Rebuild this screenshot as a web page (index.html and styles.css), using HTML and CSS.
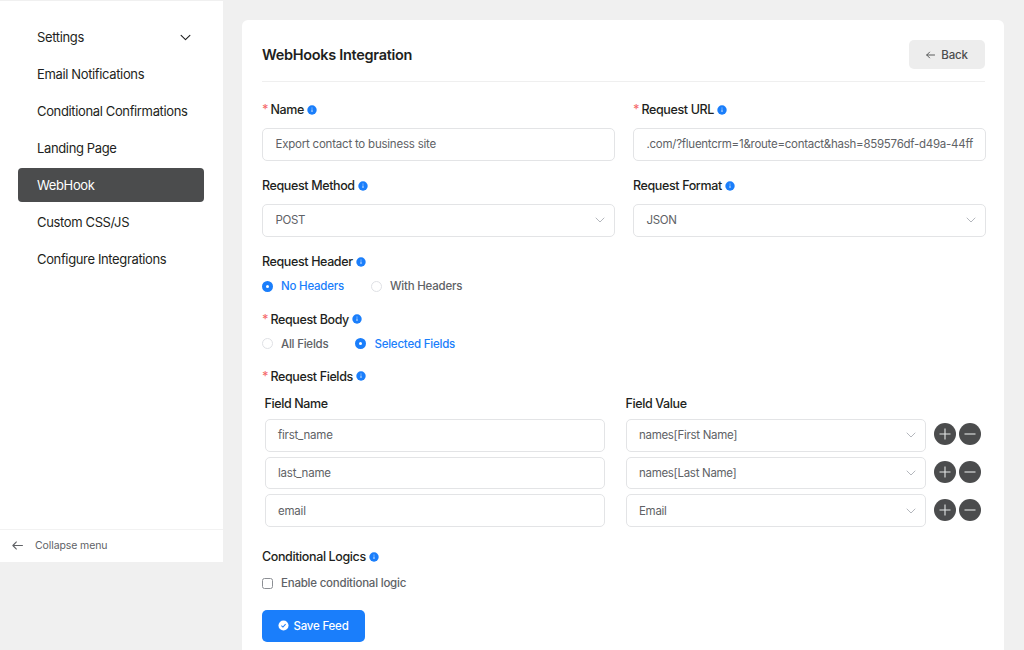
FILE: index.html
```
<!DOCTYPE html>
<html lang="en">
<head>
    <meta charset="UTF-8">
    <meta name="viewport" content="width=device-width, initial-scale=1.0">
    <title>WebHooks Integration</title>
    <link rel="stylesheet" href="styles.css">
</head>
<body>
    <!-- shared icons -->
    <svg class="sprite" width="0" height="0">
        <symbol id="info" viewBox="0 0 10 10">
            <circle cx="5" cy="5" r="4.7" fill="#1a7efb"/>
            <path d="M5 4.5v2.6" stroke="#c4deff" stroke-width="1.1"/>
            <circle cx="5" cy="3" r=".6" fill="#c4deff"/>
        </symbol>
        <symbol id="down" viewBox="0 0 10 6">
            <path d="M1 1l4 4 4-4" fill="none" stroke="currentColor" stroke-linecap="round" stroke-linejoin="round"/>
        </symbol>
        <symbol id="left" viewBox="0 0 10 8">
            <path d="M9.5 4H.8M4 .8L.8 4 4 7.2" fill="none" stroke="currentColor" stroke-linecap="round" stroke-linejoin="round"/>
        </symbol>
        <symbol id="plus" viewBox="0 0 22 22">
            <path d="M11 5.5v11M5.5 11h11" stroke="#e4e5e5" stroke-width="1.1"/>
        </symbol>
        <symbol id="minus" viewBox="0 0 22 22">
            <path d="M5.5 11h11" stroke="#e4e5e5" stroke-width="1.1"/>
        </symbol>
    </svg>

    <div class="page">
        <aside class="sidebar">
            <ul class="menu">
                <li>Settings <svg class="menu-arrow"><use href="#down"/></svg></li>
                <li>Email Notifications</li>
                <li>Conditional Confirmations</li>
                <li>Landing Page</li>
                <li class="active">WebHook</li>
                <li>Custom CSS/JS</li>
                <li>Configure Integrations</li>
            </ul>
            <div class="collapse">
                <svg class="collapse-arrow"><use href="#left"/></svg>
                <span>Collapse menu</span>
            </div>
        </aside>

        <main class="card">
            <div class="card-head">
                <h1>WebHooks Integration</h1>
                <button class="back"><svg><use href="#left"/></svg>Back</button>
            </div>

            <div class="grid">
                <div class="group">
                    <div class="label"><i>*</i>Name <svg><use href="#info"/></svg></div>
                    <div class="input">Export contact to business site</div>
                </div>
                <div class="group">
                    <div class="label"><i>*</i>Request URL <svg><use href="#info"/></svg></div>
                    <div class="input url">.com/?fluentcrm=1&amp;route=contact&amp;hash=859576df-d49a-44ff</div>
                </div>
                <div class="group">
                    <div class="label">Request Method <svg><use href="#info"/></svg></div>
                    <div class="input select">POST <svg><use href="#down"/></svg></div>
                </div>
                <div class="group">
                    <div class="label">Request Format <svg><use href="#info"/></svg></div>
                    <div class="input select">JSON <svg><use href="#down"/></svg></div>
                </div>
            </div>

            <div class="choice">
                <div class="label">Request Header <svg><use href="#info"/></svg></div>
                <div class="radios">
                    <label class="radio checked"><span class="dot"></span>No Headers</label>
                    <label class="radio"><span class="dot"></span>With Headers</label>
                </div>
            </div>
            <div class="choice">
                <div class="label"><i>*</i>Request Body <svg><use href="#info"/></svg></div>
                <div class="radios">
                    <label class="radio"><span class="dot"></span>All Fields</label>
                    <label class="radio checked"><span class="dot"></span>Selected Fields</label>
                </div>
            </div>

            <div class="label"><i>*</i>Request Fields <svg><use href="#info"/></svg></div>
            <div class="fields">
                <div class="fields-head">
                    <div class="label">Field Name</div>
                    <div class="label">Field Value</div>
                </div>
                <div class="fields-row">
                    <div class="input">first_name</div>
                    <div class="input select">names[First Name] <svg><use href="#down"/></svg></div>
                    <div class="actions">
                        <button><svg><use href="#plus"/></svg></button>
                        <button><svg><use href="#minus"/></svg></button>
                    </div>
                </div>
                <div class="fields-row">
                    <div class="input">last_name</div>
                    <div class="input select">names[Last Name] <svg><use href="#down"/></svg></div>
                    <div class="actions">
                        <button><svg><use href="#plus"/></svg></button>
                        <button><svg><use href="#minus"/></svg></button>
                    </div>
                </div>
                <div class="fields-row">
                    <div class="input">email</div>
                    <div class="input select">Email <svg><use href="#down"/></svg></div>
                    <div class="actions">
                        <button><svg><use href="#plus"/></svg></button>
                        <button><svg><use href="#minus"/></svg></button>
                    </div>
                </div>
            </div>

            <div class="label">Conditional Logics <svg><use href="#info"/></svg></div>
            <label class="check"><span class="box"></span>Enable conditional logic</label>

            <button class="save">
                <svg viewBox="0 0 12 12">
                    <circle cx="6" cy="6" r="5.5" fill="#fff"/>
                    <path d="M3.7 6.1l1.7 1.6 2.9-3.1" fill="none" stroke="#1a7efb" stroke-width="1.1"/>
                </svg>
                Save Feed
            </button>
        </main>
    </div>
</body>
</html>
```
FILE: styles.css
```
* {
    box-sizing: border-box;
}

body {
    margin: 0;
    background: #f0f0f0;
    font-family: Inter, "Liberation Sans", sans-serif;
    font-size: 11.5px;
    letter-spacing: -0.22px;
    color: #606266;
    overflow: hidden;
}

.sprite {
    display: none;
}

button {
    border: 0;
    padding: 0;
    font-family: inherit;
    cursor: pointer;
}

.page {
    display: flex;
    align-items: flex-start;
    height: 650px;
}

/* sidebar */
.sidebar {
    display: flex;
    flex-direction: column;
    justify-content: space-between;
    width: 223px;
    height: 561px;
    margin-top: 1px;
    background: #fff;
}

.menu {
    list-style: none;
    margin: 0;
    padding: 19px 19.5px 0 17.5px;
}

.menu li {
    display: flex;
    align-items: center;
    justify-content: space-between;
    height: 34px;
    margin-bottom: 3px;
    padding: 0 13px 0 19.5px;
    border-radius: 4px;
    font-size: 13px;
    letter-spacing: -0.36px;
    color: #1e1f21;
    white-space: nowrap;
}

.menu li.active {
    background: #4b4c4d;
    color: #fff;
}

.menu-arrow {
    width: 11px;
    height: 7px;
}

.collapse {
    display: flex;
    align-items: center;
    gap: 12px;
    height: 33.5px;
    padding-left: 12px;
    border-top: 1px solid #f2f2f2;
    font-size: 10.5px;
    letter-spacing: -0.1px;
}

.collapse-arrow {
    width: 11px;
    height: 9px;
}

/* main card */
.card {
    width: 762px;
    height: 640px;
    margin: 20px 0 0 19px;
    padding: 20px 19px 0 20px;
    border-radius: 6px;
    background: #fff;
}

.card-head {
    display: flex;
    align-items: flex-start;
    justify-content: space-between;
    height: 42px;
    margin-bottom: 17.5px;
    border-bottom: 1px solid #efefef;
}

h1 {
    margin: 0;
    line-height: 29px;
    font-size: 14.5px;
    font-weight: 600;
    letter-spacing: -0.3px;
    color: #1e1f21;
}

.back {
    display: flex;
    align-items: center;
    justify-content: center;
    gap: 6px;
    width: 76px;
    height: 29px;
    border-radius: 5px;
    background: #ededed;
    font-size: 11.5px;
    font-weight: 500;
    letter-spacing: -0.2px;
    color: #4b4c4d;
}

.back svg {
    width: 9px;
    height: 8px;
}

.grid {
    display: grid;
    grid-template-columns: 353px 353px;
    column-gap: 18px;
    row-gap: 15px;
}

.label {
    display: flex;
    align-items: center;
    height: 20px;
    font-size: 12.5px;
    font-weight: 500;
    letter-spacing: -0.38px;
    color: #1e1f21;
    white-space: nowrap;
}

.label i {
    width: 8.5px;
    font-style: normal;
    color: #f56c6c;
}

.label svg {
    width: 10px;
    height: 10px;
    margin-left: 3.5px;
}

.input {
    display: flex;
    align-items: center;
    justify-content: space-between;
    height: 32.5px;
    padding: 0 12px;
    border: 1px solid #e3e4e6;
    border-radius: 5px;
    white-space: nowrap;
}

.group .input {
    margin-top: 8.5px;
    padding-left: 12.5px;
}

.input.url {
    letter-spacing: -0.26px;
}

.select {
    letter-spacing: -0.3px;
}

.select svg {
    width: 10px;
    height: 6px;
    margin-right: -2.5px;
    color: #b4b7bd;
}

.choice {
    height: 57.3px;
}

.grid + .choice {
    margin-top: 15.3px;
}

.radios {
    display: flex;
    gap: 27px;
    margin-top: 4.5px;
}

.radio,
.check {
    display: flex;
    align-items: center;
    height: 20px;
    gap: 8px;
    font-weight: 500;
}

.radio.checked {
    color: #1a7efb;
}

.dot {
    width: 11px;
    height: 11px;
    border: 1px solid #dfe1e5;
    border-radius: 50%;
}

.checked .dot {
    border: 4px solid #1a7efb;
}

/* request fields */
.fields {
    padding: 7.5px 0 0 3px;
    margin-bottom: 20px;
}

.fields-head,
.fields-row {
    display: grid;
    grid-template-columns: 340px 300px 47px;
    align-items: center;
    column-gap: 21px;
}

.fields-head {
    margin-bottom: 5.2px;
}

.fields-head .label {
    margin-left: -0.5px;
}

.fields-row {
    height: 32.5px;
    margin-bottom: 5.1px;
}

.actions {
    display: flex;
    gap: 3px;
    margin: -2px 0 0 -12.9px;
}

.actions button {
    width: 22px;
    height: 22px;
    border-radius: 50%;
    background: #4b4c4d;
}

.actions svg {
    display: block;
    width: 22px;
    height: 22px;
}

.check {
    margin-top: 6.5px;
}

.box {
    width: 11px;
    height: 11px;
    border: 1px solid #8c8f94;
    border-radius: 2.5px;
}

.save {
    display: flex;
    align-items: center;
    justify-content: center;
    gap: 4px;
    width: 103px;
    height: 32px;
    margin-top: 16.5px;
    border-radius: 5px;
    background: #1a7efb;
    font-size: 11.5px;
    font-weight: 500;
    letter-spacing: -0.2px;
    color: #fff;
}

.save svg {
    width: 11px;
    height: 11px;
}
```
